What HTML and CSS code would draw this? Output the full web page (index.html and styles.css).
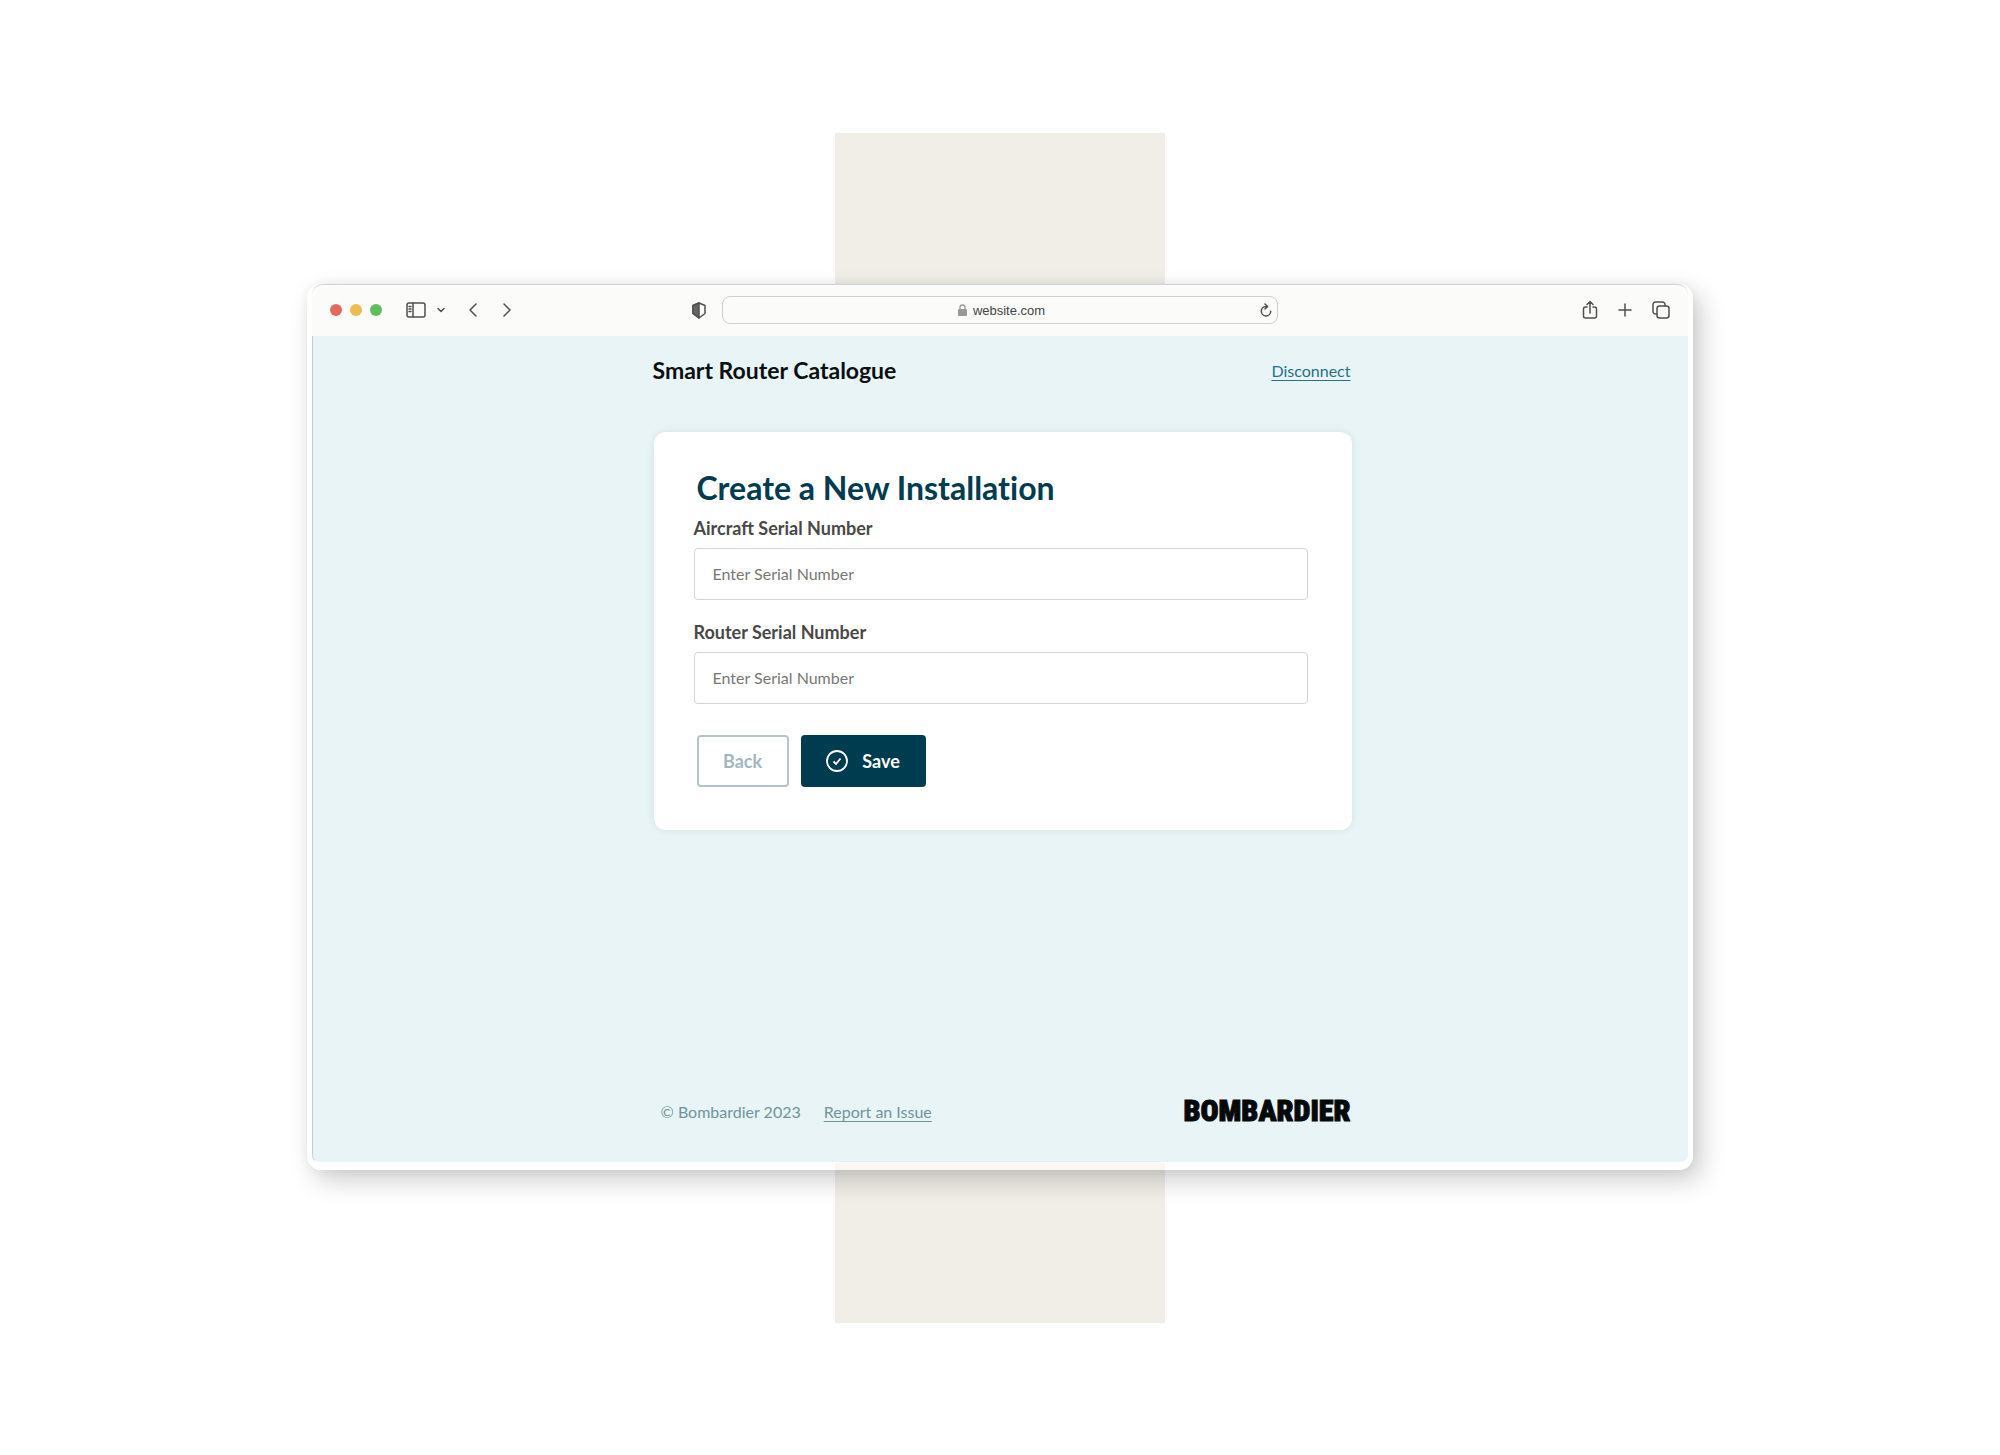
FILE: index.html
```html
<!DOCTYPE html>
<html lang="en">
<head>
    <meta charset="UTF-8">
    <meta name="viewport" content="width=device-width, initial-scale=1.0">
    <title>Smart Router Catalogue</title>
    <link rel="stylesheet" href="styles.css">
</head>
<body>
    <div class="stage">
        <div class="band"></div>

        <div class="window">
            <div class="toolbar">
                <div class="toolbar-left">
                    <span class="dot red"></span>
                    <span class="dot yellow"></span>
                    <span class="dot green"></span>
                    <button type="button" class="icon sidebar" aria-label="Sidebar">
                        <svg width="20" height="16" viewBox="0 0 20 16"><rect x="1" y="1" width="18" height="14" rx="2"/><path d="M7 1v14M3 4.5h2M3 7h2M3 9.5h2"/></svg>
                    </button>
                    <button type="button" class="icon chevron" aria-label="Tab groups">
                        <svg width="8" height="6" viewBox="0 0 8 6"><path d="M1 1.5l3 3 3-3"/></svg>
                    </button>
                    <button type="button" class="icon prev" aria-label="Previous page">
                        <svg width="8" height="14" viewBox="0 0 8 14"><path d="M7 1L1 7l6 6"/></svg>
                    </button>
                    <button type="button" class="icon next" aria-label="Next page">
                        <svg width="8" height="14" viewBox="0 0 8 14"><path d="M1 1l6 6-6 6"/></svg>
                    </button>
                    <button type="button" class="icon shield" aria-label="Privacy report">
                        <svg width="14" height="17" viewBox="0 0 14 17"><path d="M7 1l6 2.5v8L7 16l-6-4.5v-8z"/><path class="fill" d="M7 1v15l-6-4.5v-8z"/></svg>
                    </button>
                </div>
                <div class="address">
                    <span class="site">
                        <svg width="9" height="12" viewBox="0 0 9 12"><rect x="0" y="5" width="9" height="7" rx="1" fill="#999"/><path d="M2 6V3.5a2.5 2.5 0 0 1 5 0V6" fill="none" stroke="#999" stroke-width="1.3"/></svg>
                        website.com
                    </span>
                    <button type="button" class="icon" aria-label="Reload">
                        <svg width="12" height="14" viewBox="0 0 12 14"><path d="M6 3.5a4.7 4.7 0 1 0 4.7 4.7M5 1l2.5 2.6L5 6"/></svg>
                    </button>
                </div>
                <div class="toolbar-right">
                    <button type="button" class="icon" aria-label="Share">
                        <svg width="16" height="20" viewBox="0 0 16 20"><path d="M5 7H3.5A2 2 0 0 0 1.5 9v7a2 2 0 0 0 2 2h9a2 2 0 0 0 2-2V9a2 2 0 0 0-2-2H11M8 13V1.5M5 4.5l3-3 3 3"/></svg>
                    </button>
                    <button type="button" class="icon" aria-label="New tab">
                        <svg width="14" height="14" viewBox="0 0 14 14"><path d="M7 1v12M1 7h12"/></svg>
                    </button>
                    <button type="button" class="icon" aria-label="Show tabs">
                        <svg width="18" height="18" viewBox="0 0 18 18"><path d="M5 13H3.5A2.5 2.5 0 0 1 1 10.5v-7A2.5 2.5 0 0 1 3.5 1h7A2.5 2.5 0 0 1 13 3.5V5"/><rect x="5" y="5" width="12" height="12" rx="2.5"/></svg>
                    </button>
                </div>
            </div>

            <div class="page">
                <header class="header">
                    <h1>Smart Router Catalogue</h1>
                    <a href="#" class="disconnect">Disconnect</a>
                </header>

                <form class="card">
                    <h2>Create a New Installation</h2>
                    <label for="aircraft">Aircraft Serial Number</label>
                    <input type="text" id="aircraft" placeholder="Enter Serial Number">
                    <label for="router">Router Serial Number</label>
                    <input type="text" id="router" placeholder="Enter Serial Number">
                    <div class="actions">
                        <button type="button" class="btn back">Back</button>
                        <button type="submit" class="btn save">
                            <svg width="22" height="22" viewBox="0 0 22 22"><circle cx="11" cy="11" r="10"/><path d="M7.5 11.5l2.5 2.5 4.5-5.5"/></svg>
                            Save
                        </button>
                    </div>
                </form>

                <footer class="footer">
                    <span>© Bombardier 2023</span>
                    <a href="#">Report an Issue</a>
                    <span class="logo">BOMBARDIER</span>
                </footer>
            </div>
        </div>
    </div>
</body>
</html>
```

FILE: styles.css
```css
* {
    box-sizing: border-box;
}
body {
    margin: 0;
    background-color: #fff;
    font-family: Lato, sans-serif;
    color: #484848;
}
h1, h2 {
    margin: 0;
    font-weight: bold;
}
button {
    font-family: inherit;
    cursor: pointer;
}

/* backdrop */
.stage {
    display: grid;
    min-height: 100vh;
    padding: 133px 0 132px;
}
.band {
    grid-area: 1 / 1;
    justify-self: center;
    width: 330px;
    background-color: #f0eee7;
}

/* browser window */
.window {
    grid-area: 1 / 1;
    display: flex;
    flex-direction: column;
    justify-self: center;
    width: 69.3%;
    margin: 151px 0 153px;
    border: 5px solid rgba(255, 255, 255, 0.5);
    border-top: 0;
    border-bottom-width: 7px;
    border-radius: 14px;
    background-clip: padding-box;
    box-shadow: 8px 10px 26px rgba(0, 0, 0, 0.2), 0 0 12px rgba(0, 0, 0, 0.05);
}
.toolbar {
    display: grid;
    grid-template-columns: 1fr 556px 1fr;
    align-items: center;
    height: 52px;
    padding-bottom: 1px;
    background-color: #fbfbfa;
    border-top: 1px solid #d4d4d2;
    border-radius: 10px 10px 0 0;
}
.toolbar-left, .toolbar-right {
    display: flex;
    align-items: center;
}
.toolbar-left {
    padding: 0 16px 0 18px;
}
.toolbar-right {
    justify-content: flex-end;
    gap: 20px;
    padding-right: 18px;
}
.dot {
    width: 12px;
    height: 12px;
    margin-right: 8px;
    border-radius: 50%;
}
.red {
    background-color: #e4695f;
}
.yellow {
    background-color: #efbc4f;
}
.green {
    background-color: #5fbe5b;
}
.icon {
    display: flex;
    padding: 0;
    border: none;
    background: none;
}
.icon svg {
    fill: none;
    stroke: #505050;
    stroke-width: 1.5;
    stroke-linecap: round;
    stroke-linejoin: round;
}
.icon .fill {
    fill: #666;
}
.sidebar {
    margin-left: 16px;
}
.chevron {
    margin-left: 11px;
}
.prev {
    margin-left: 24px;
}
.next {
    margin-left: 26px;
}
.shield {
    margin-left: auto;
}
.address {
    display: flex;
    align-items: center;
    height: 28px;
    padding: 0 5px 0 20px;
    border: 1px solid #cfcfcf;
    border-radius: 8px;
}
.site {
    display: flex;
    flex: 1;
    align-items: center;
    justify-content: center;
    gap: 6px;
    font-family: "Liberation Sans", sans-serif;
    font-size: 13px;
    color: #444;
}

/* page */
.page {
    padding: 20px 16px 33px 20px;
    background-color: #e8f4f6;
    border-left: 1px solid #ccc;
    border-bottom: 1px solid #fff;
    border-radius: 0 0 8px 8px;
}
.header, .card, .footer {
    max-width: 700px;
    margin: 0 auto;
}
.header {
    display: flex;
    align-items: center;
    justify-content: space-between;
    height: 28px;
    padding-right: 2px;
}
.header h1 {
    font-size: 23px;
    color: #0a0f12;
}
.disconnect {
    font-size: 16px;
    color: #23718a;
    text-underline-offset: 3px;
}
.card {
    max-width: 698px;
    margin-top: 48px;
    padding: 36px 44px 43px 40px;
    background-color: #fff;
    border-radius: 12px;
    box-shadow: 0 0 10px rgba(0, 50, 60, 0.08);
}
.card h2 {
    margin-left: 3px;
    font-size: 32px;
    font-variant-ligatures: none;
    line-height: 40px;
    color: #003c50;
}
.card label {
    display: block;
    margin: 8px 0;
    font-size: 18px;
    font-weight: bold;
    line-height: 24px;
}
.card input {
    display: block;
    width: 100%;
    height: 52px;
    margin-bottom: 20px;
    padding: 0 18px 2px;
    border: 1px solid #d4d4d4;
    border-radius: 4px;
    font-family: inherit;
    font-size: 16px;
}
.card input::placeholder {
    color: #777;
}
.actions {
    display: flex;
    gap: 12px;
    margin: 31px 0 0 3px;
}
.btn {
    display: flex;
    align-items: center;
    justify-content: center;
    gap: 14px;
    height: 52px;
    border-radius: 4px;
    font-size: 18px;
    font-weight: bold;
}
.back {
    width: 92px;
    border: 2px solid #b4c4ca;
    background-color: #fff;
    color: #a3b6bf;
}
.save {
    width: 125px;
    border: none;
    background-color: #003c4f;
    color: #fff;
}
.save svg {
    fill: none;
    stroke: #fff;
    stroke-width: 1.8;
}
.footer {
    display: flex;
    align-items: center;
    gap: 23px;
    margin-top: 263px;
    padding: 0 2px 0 8px;
    font-size: 16px;
    color: #6f949b;
}
.footer a {
    color: inherit;
    text-underline-offset: 3px;
}
.logo {
    margin-left: auto;
    font-family: "Roboto Condensed", Roboto, sans-serif;
    font-size: 30px;
    font-weight: 900;
    line-height: 36px;
    color: #06090a;
    -webkit-text-stroke: 1px #06090a;
}
```
